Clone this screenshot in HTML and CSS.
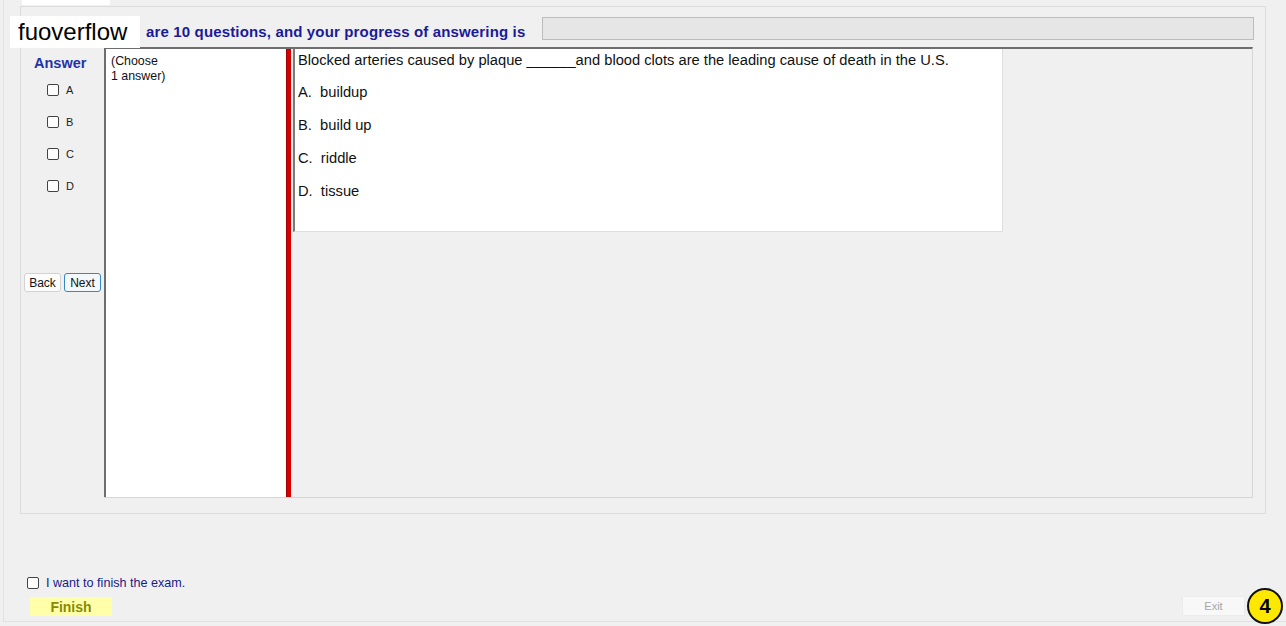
FILE: index.html
```html
<!DOCTYPE html>
<html lang="en">
<head>
    <meta charset="UTF-8">
    <meta name="viewport" content="width=device-width, initial-scale=1.0">
    <title>Exam</title>
    <link rel="stylesheet" href="styles.css">
</head>
<body>
    <div class="window">
        <div class="top-strip">
            <div class="tab-cell"></div>
        </div>

        <div class="group">
            <div class="header">
                <p class="title">are 10 questions, and your progress of answering is</p>
                <div class="progress"></div>
            </div>

            <div class="main">
                <div class="answer-col">
                    <div class="answer-title">Answer</div>
                    <div class="choices">
                        <label class="choice"><span class="box"></span>A</label>
                        <label class="choice"><span class="box"></span>B</label>
                        <label class="choice"><span class="box"></span>C</label>
                        <label class="choice"><span class="box"></span>D</label>
                    </div>
                    <div class="nav">
                        <button class="nav-btn">Back</button>
                        <button class="nav-btn active">Next</button>
                    </div>
                </div>

                <div class="panel">
                    <div class="choose-pane">(Choose<br>1 answer)</div>
                    <div class="splitter"></div>
                    <div class="question-area">
                        <div class="question-box">
                            <p class="question">Blocked arteries caused by plaque ______and blood clots are the leading cause of death in the U.S.</p>
                            <p class="option">A.&nbsp; buildup</p>
                            <p class="option">B.&nbsp; build up</p>
                            <p class="option">C.&nbsp; riddle</p>
                            <p class="option">D.&nbsp; tissue</p>
                        </div>
                    </div>
                </div>
            </div>
        </div>

        <div class="footer">
            <div class="finish-block">
                <label class="finish-check"><span class="box"></span>I want to finish the exam.</label>
                <button class="finish-btn">Finish</button>
            </div>
            <button class="exit-btn">Exit</button>
        </div>
    </div>

    <div class="watermark">fuoverflow</div>
    <div class="badge">4</div>
</body>
</html>
```

FILE: styles.css
```css
* {
    margin: 0;
    padding: 0;
    box-sizing: border-box;
}

body {
    width: 1286px;
    height: 626px;
    overflow: hidden;
    position: relative;
    background: #f0f0f0;
    font-family: 'Liberation Sans', Arial, sans-serif;
    color: #111;
}

.window {
    margin-left: 3px;
    height: 622px;
    border-left: 1px solid #e2e2e2;
    border-bottom: 1px solid #e2e2e2;
    display: flex;
    flex-direction: column;
}

.top-strip {
    height: 6px;
    padding-left: 18px;
}

.tab-cell {
    width: 88px;
    height: 5px;
    background: #fff;
}

.group {
    margin-left: 16px;
    width: 1246px;
    height: 508px;
    border: 1px solid #dcdcdc;
}

/* header: title + progress */
.header {
    display: flex;
    align-items: flex-start;
    height: 40px;
}

.title {
    margin-left: 125px;
    margin-top: 17px;
    font-size: 15px;
    line-height: 16px;
    letter-spacing: 0.15px;
    font-weight: bold;
    color: #1a1a9a;
    white-space: nowrap;
}

.progress {
    margin-top: 10px;
    margin-left: auto;
    margin-right: 11px;
    width: 712px;
    height: 23px;
    background: #e6e6e6;
    border: 1px solid #bcbcbc;
}

.main {
    display: flex;
    height: 451px;
}

/* left answer column */
.answer-col {
    width: 83px;
    display: flex;
    flex-direction: column;
}

.answer-title {
    margin-top: 8px;
    margin-left: 13px;
    font-size: 14.5px;
    line-height: 16px;
    font-weight: bold;
    color: #2433a8;
}

.choices {
    margin-top: 3px;
    margin-left: 26px;
    display: flex;
    flex-direction: column;
}

.choice {
    display: flex;
    align-items: center;
    height: 32px;
    font-size: 11px;
    color: #222;
}

.box {
    display: inline-block;
    width: 12px;
    height: 12px;
    margin-right: 7px;
    background: #fff;
    border: 1px solid #444;
    border-radius: 2px;
}

.nav {
    margin-top: 71px;
    margin-left: 3px;
    display: flex;
    gap: 3px;
}

.nav-btn {
    width: 37px;
    height: 19px;
    font-family: 'Liberation Sans', Arial, sans-serif;
    font-size: 12px;
    color: #111;
    background: #fcfcfc;
    border: 1px solid #d2d2d2;
    border-radius: 3px;
}

.nav-btn.active {
    background: #f2f8fc;
    border-color: #3a86c4;
}

/* panel with panes */
.panel {
    width: 1149px;
    display: flex;
    border-top: 2px solid #6e6e6e;
    border-right: 1px solid #d6d6d6;
    border-bottom: 1px solid #d6d6d6;
}

.choose-pane {
    width: 182px;
    background: #fff;
    border-left: 2px solid #6e6e6e;
    padding: 5px 5px;
    font-size: 12.4px;
    line-height: 15px;
    color: #111;
}

.splitter {
    width: 5px;
    background: #d40000;
    border-left: 1px solid #a00000;
}

.question-area {
    flex: 1;
    padding-left: 2px;
}

.question-box {
    width: 710px;
    height: 183px;
    background: #fff;
    border-left: 2px solid #7a7a7a;
    border-right: 1px solid #dedede;
    border-bottom: 1px solid #dedede;
    padding: 1px 0 0 3px;
    font-size: 14.7px;
    color: #111;
}

.question {
    line-height: 20px;
}

.option {
    line-height: 33px;
}

.question + .option {
    margin-top: 6px;
}

/* footer */
.footer {
    flex: 1;
    display: flex;
    align-items: flex-end;
    justify-content: space-between;
    padding: 0 41px 5px 23px;
}

.finish-block {
    display: flex;
    flex-direction: column;
}

.finish-check {
    display: flex;
    align-items: center;
    font-size: 12.6px;
    color: #1a1a88;
    height: 14px;
}

.finish-check .box {
    margin-right: 7px;
}

.finish-btn {
    margin-top: 7px;
    margin-left: 3px;
    width: 82px;
    height: 19px;
    border: none;
    background: #ffffaa;
    font-family: 'Liberation Sans', Arial, sans-serif;
    font-size: 14px;
    font-weight: bold;
    color: #8a8a00;
}

.exit-btn {
    width: 63px;
    height: 20px;
    background: #f8f8f8;
    border: 1px solid #ececec;
    font-family: 'Liberation Sans', Arial, sans-serif;
    font-size: 11px;
    color: #a6a6a6;
}

/* overlays */
.watermark {
    position: absolute;
    left: 10px;
    top: 16px;
    width: 130px;
    height: 32px;
    background: #fff;
    padding-left: 8px;
    font-size: 24px;
    line-height: 32px;
    color: #000;
}

.badge {
    position: absolute;
    left: 1247px;
    top: 588px;
    width: 36px;
    height: 36px;
    border: 2px solid #111;
    border-radius: 50%;
    background: #ffe800;
    display: flex;
    align-items: center;
    justify-content: center;
    font-size: 20px;
    font-weight: bold;
    color: #000;
}
```
